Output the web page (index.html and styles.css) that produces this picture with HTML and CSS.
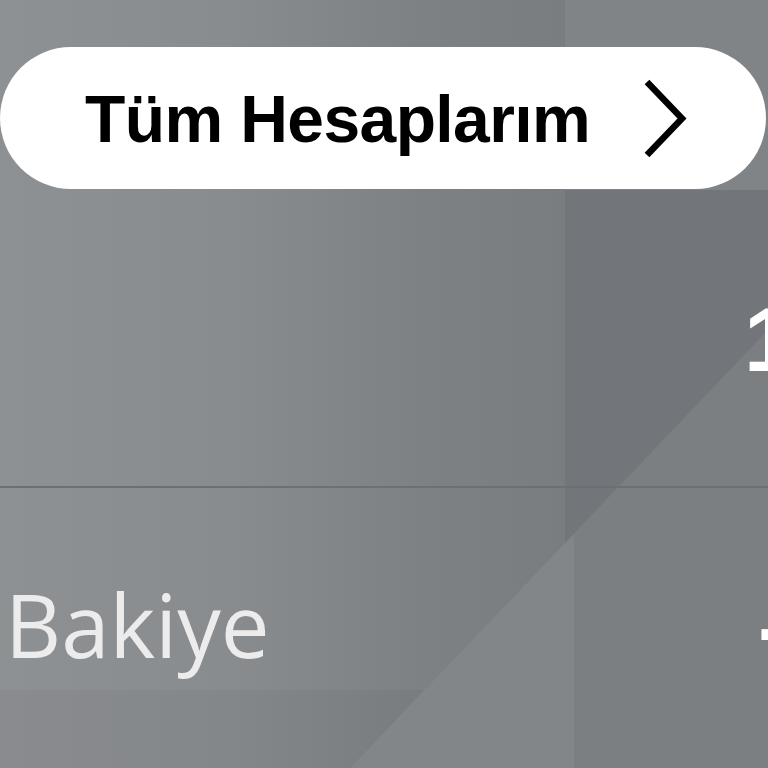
FILE: index.html
```html
<!DOCTYPE html>
<html lang="tr">
<head>
<meta charset="utf-8">
<title>Hesaplarım</title>
<link rel="stylesheet" href="styles.css">
</head>
<body>
<div class="screen">
  <svg class="bg" width="768" height="768" viewBox="0 0 768 768" aria-hidden="true">
    <defs>
      <linearGradient id="g" x1="0" y1="0" x2="1" y2="0">
        <stop offset="0" stop-color="#8e9194"/>
        <stop offset="0.3" stop-color="#898c8f"/>
        <stop offset="0.55" stop-color="#7d8184"/>
        <stop offset="0.74" stop-color="#797d80"/>
        <stop offset="1" stop-color="#797d80"/>
      </linearGradient>
    </defs>
    <rect x="0" y="0" width="768" height="768" fill="url(#g)"/>
    <rect x="565" y="0" width="203" height="190" fill="#818487"/>
    <polygon points="565,190 768,190 768,330 565,543" fill="#72767a"/>
    <polygon points="565,543 768,330 768,768 350,768" fill="#7b7f82"/>
    <polygon points="565,543 574,534 574,768 350,768" fill="#828689"/>
    <polygon points="0,690 424,690 350,768 0,768" fill="#000" fill-opacity="0.035"/>
  </svg>

  <div class="content">
    <button class="pill" type="button">
      <span class="pill-label">Tüm Hesaplarım</span>
      <svg class="chev" width="44" height="80" viewBox="0 0 44 80" aria-hidden="true">
        <polyline points="4,3 39,39.5 4,76" fill="none" stroke="#000" stroke-width="6.5"/>
      </svg>
    </button>

    <div class="row amount-row">
      <span class="spacer"></span>
      <span class="amount">1</span>
    </div>

    <div class="divider"></div>

    <div class="row balance-row">
      <span class="label">Bakiye</span>
      <span class="value">-</span>
    </div>
  </div>
</div>
</body>
</html>
```

FILE: styles.css
```css
html, body {
  margin: 0;
  padding: 0;
}

body {
  width: 768px;
  height: 768px;
  overflow: hidden;
  background: #7d8184;
  font-family: "Liberation Sans", Arial, sans-serif;
}

.screen {
  position: relative;
  width: 768px;
  height: 768px;
  overflow: hidden;
}

.bg {
  position: absolute;
  left: 0;
  top: 0;
  display: block;
}

.content {
  position: relative;
  display: flex;
  flex-direction: column;
  width: 768px;
  padding-top: 47px;
}

.pill {
  display: flex;
  align-items: center;
  justify-content: space-between;
  box-sizing: border-box;
  width: 766px;
  height: 142px;
  margin: 0;
  padding: 0 79px 0 85px;
  border: none;
  border-radius: 71px;
  background: #ffffff;
  font-family: "Liberation Sans", Arial, sans-serif;
  cursor: pointer;
}

.pill-label {
  font-size: 66px;
  font-weight: 700;
  color: #000;
  letter-spacing: -0.6px;
  line-height: 1;
  padding-top: 2px;
}

.chev {
  display: block;
  flex: none;
  margin-top: 2px;
}

.row {
  display: flex;
  align-items: baseline;
  white-space: nowrap;
}

.amount-row {
  height: 297px;
  box-sizing: border-box;
  padding-top: 106px;
}

.spacer {
  width: 744px;
  flex: none;
}

.amount {
  font-size: 90px;
  font-weight: 700;
  color: #ffffff;
  line-height: 1;
}

.divider {
  height: 2px;
  background: #6c7074;
}

.balance-row {
  padding-top: 93px;
  padding-left: 5px;
}

.label {
  flex: none;
  width: 753px;
  font-family: "Open Sans", "Liberation Sans", sans-serif;
  font-size: 87px;
  font-weight: 400;
  color: #ececec;
  line-height: 1;
}

.value {
  font-size: 90px;
  font-weight: 700;
  color: #ffffff;
  line-height: 1;
}
```
